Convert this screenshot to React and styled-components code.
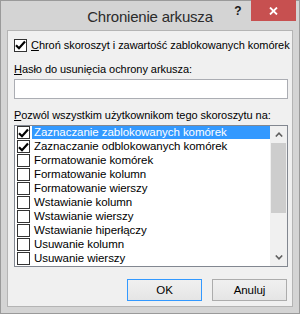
import React from 'react';
import styled, { createGlobalStyle } from 'styled-components';

const GlobalStyle = createGlobalStyle`
  html, body {
    margin: 0;
    padding: 0;
    background: #ffffff;
  }
  body {
    font-family: "Liberation Sans", Arial, sans-serif;
    font-size: 11px;
    letter-spacing: -0.05px;
    color: #000;
  }
`;

const Window = styled.div`
  width: 300px;
  height: 314px;
  box-sizing: border-box;
  border: 1px solid #9a9a9a;
  background: #d4d4d4;
  padding: 0 6px 6px 6px;
  display: flex;
  flex-direction: column;
`;

const TitleBar = styled.div`
  height: 29px;
  display: grid;
  grid-template-columns: 1fr auto 1fr;
  align-items: start;
  margin: 0 -6px;
`;

const Title = styled.div`
  grid-column: 2;
  font-size: 15px;
  color: #2b2b2b;
  padding-top: 7px;
  letter-spacing: -0.2px;
`;

const Controls = styled.div`
  grid-column: 3;
  justify-self: end;
  display: flex;
  margin-top: -1px;
  margin-right: 3px;
`;

const HelpButton = styled.div`
  width: 26px;
  height: 21px;
  display: flex;
  align-items: center;
  justify-content: center;
  font-weight: bold;
  font-size: 12px;
  color: #1a1a1a;
  padding-top: 1px;
  box-sizing: border-box;
`;

const CloseButton = styled.div`
  width: 45px;
  height: 21px;
  background: #c75050;
  display: flex;
  align-items: center;
  justify-content: center;
`;

const Content = styled.div`
  flex: 1;
  border: 1px solid #b4b4b4;
  background: #f0f0f0;
  padding: 7px 4px 0 6px;
  display: flex;
  flex-direction: column;
`;

const CheckRow = styled.label`
  display: flex;
  align-items: center;
  height: 14px;
  gap: 4px;
  white-space: nowrap;
`;

const Box = styled.span`
  width: 13px;
  height: 13px;
  box-sizing: border-box;
  border: 1px solid #333333;
  background: #ffffff;
  display: flex;
  align-items: center;
  justify-content: center;
  flex: none;
`;

const Key = styled.span`
  text-decoration: underline;
`;

const FieldLabel = styled.div`
  margin-top: ${p => p.$top}px;
  height: 14px;
  line-height: 14px;
  white-space: nowrap;
`;

const Input = styled.div`
  margin-top: 3px;
  width: 274px;
  height: 20px;
  box-sizing: border-box;
  border: 1px solid #abadb3;
  background: #ffffff;
`;

const ListBox = styled.div`
  margin-top: 3px;
  width: 274px;
  height: 142px;
  box-sizing: border-box;
  border: 1px solid #828790;
  background: #ffffff;
  display: flex;
`;

const Items = styled.div`
  flex: 1;
  display: flex;
  flex-direction: column;
  padding-left: 2px;
  overflow: hidden;
`;

const Item = styled.div`
  height: 14px;
  display: flex;
  align-items: flex-start;
  gap: 2px;
  white-space: nowrap;
`;

const ItemText = styled.span`
  flex: 1;
  height: 13px;
  line-height: 13px;
  padding-left: 2px;
  font-size: 11.5px;
  background: ${p => (p.$selected ? '#3399ff' : 'transparent')};
  color: ${p => (p.$selected ? '#ffffff' : '#000000')};
`;

const ScrollBar = styled.div`
  width: 17px;
  background: #f0f0f0;
  display: flex;
  flex-direction: column;
  align-items: center;
`;

const Arrow = styled.div`
  height: 17px;
  width: 17px;
  display: flex;
  align-items: center;
  justify-content: center;
`;

const Thumb = styled.div`
  width: 15px;
  height: 70px;
  background: #cdcdcd;
`;

const Track = styled.div`
  flex: 1;
`;

const ButtonRow = styled.div`
  margin-top: 12px;
  display: flex;
  justify-content: flex-end;
  gap: 10px;
  padding-right: 1px;
`;

const Button = styled.div`
  width: 75px;
  height: 22px;
  box-sizing: border-box;
  border: 1px solid ${p => (p.$default ? '#3399ff' : '#acacac')};
  background: linear-gradient(#f0f0f0, #e5e5e5);
  display: flex;
  align-items: center;
  justify-content: center;
  font-size: 11.5px;
  color: #000;
`;

const Check = () => (
  <svg width="11" height="10" viewBox="0 0 11 10">
    <path d="M1 5.2 L4 8.2 L10 1.5" fill="none" stroke="#000" strokeWidth="2.2" />
  </svg>
);

const Chevron = ({ up }) => (
  <svg width="8" height="5" viewBox="0 0 8 5">
    <path d={up ? 'M0.8 4.5 L4 1.2 L7.2 4.5' : 'M0.8 0.5 L4 3.8 L7.2 0.5'} fill="none" stroke="#606060" strokeWidth="1.6" />
  </svg>
);

const items = [
  { text: 'Zaznaczanie zablokowanych komórek', checked: true, selected: true },
  { text: 'Zaznaczanie odblokowanych komórek', checked: true },
  { text: 'Formatowanie komórek' },
  { text: 'Formatowanie kolumn' },
  { text: 'Formatowanie wierszy' },
  { text: 'Wstawianie kolumn' },
  { text: 'Wstawianie wierszy' },
  { text: 'Wstawianie hiperłączy' },
  { text: 'Usuwanie kolumn' },
  { text: 'Usuwanie wierszy' },
];

export default function App() {
  return (
    <>
      <GlobalStyle />
      <Window>
        <TitleBar>
          <Title>Chronienie arkusza</Title>
          <Controls>
            <HelpButton>?</HelpButton>
            <CloseButton>
              <svg width="9" height="8" viewBox="0 0 9 8">
                <path d="M1 0.5 L8 7.5 M8 0.5 L1 7.5" stroke="#fff" strokeWidth="1.8" />
              </svg>
            </CloseButton>
          </Controls>
        </TitleBar>
        <Content>
          <CheckRow>
            <Box><Check /></Box>
            <span><Key>C</Key>hroń skoroszyt i zawartość zablokowanych komórek</span>
          </CheckRow>
          <FieldLabel $top={10}><Key>H</Key>asło do usunięcia ochrony arkusza:</FieldLabel>
          <Input />
          <FieldLabel $top={9}><Key>P</Key>ozwól wszystkim użytkownikom tego skoroszytu na:</FieldLabel>
          <ListBox>
            <Items>
              {items.map(it => (
                <Item key={it.text}>
                  <Box>{it.checked && <Check />}</Box>
                  <ItemText $selected={it.selected}>{it.text}</ItemText>
                </Item>
              ))}
            </Items>
            <ScrollBar>
              <Arrow><Chevron up /></Arrow>
              <Thumb />
              <Track />
              <Arrow><Chevron /></Arrow>
            </ScrollBar>
          </ListBox>
          <ButtonRow>
            <Button $default>OK</Button>
            <Button>Anuluj</Button>
          </ButtonRow>
        </Content>
      </Window>
    </>
  );
}
